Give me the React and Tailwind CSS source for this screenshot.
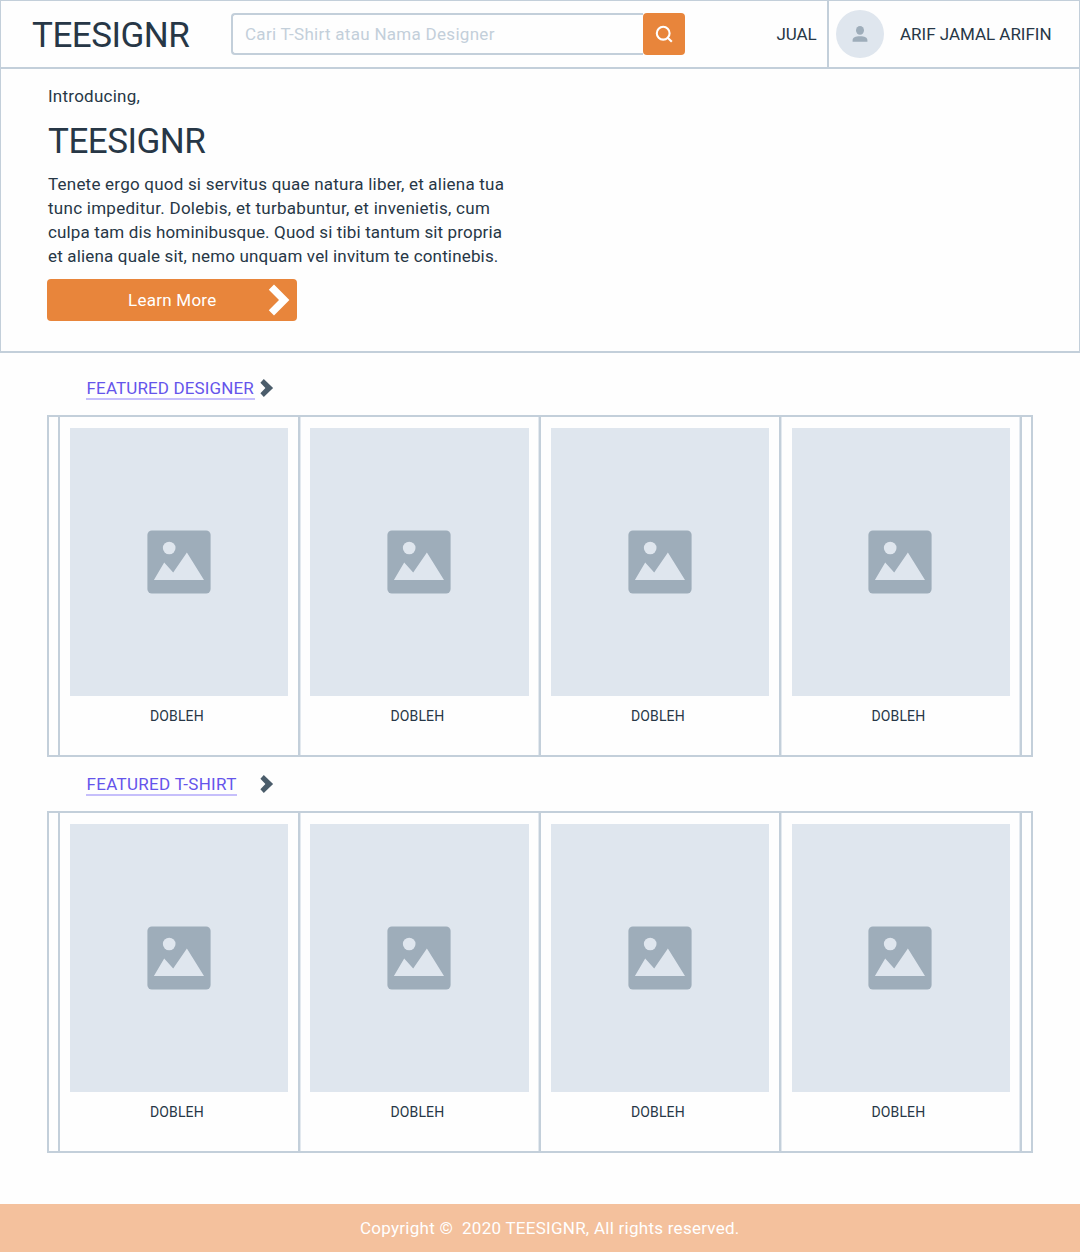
const intro = [
  { text: "Tenete ergo quod si servitus quae natura liber, et aliena tua", spacing: "tracking-[0.22px]" },
  { text: "tunc impeditur. Dolebis, et turbabuntur, et invenietis, cum", spacing: "tracking-[0.27px]" },
  { text: "culpa tam dis hominibusque. Quod si tibi tantum sit propria", spacing: "tracking-[0.14px]" },
  { text: "et aliena quale sit, nemo unquam vel invitum te continebis.", spacing: "tracking-[0.17px]" },
];

const cards = [
  { name: "DOBLEH", divider: "", cell: "w-[238px] pl-[10px]", image: "w-[218px]", icon: "ml-[77px]", label: "pl-[80px]" },
  { name: "DOBLEH", divider: "shadow-[1px_0_0_#e3e9ef]", cell: "w-[239px] pl-[10px]", image: "w-[219px]", icon: "ml-[77px]", label: "pl-[80.5px]" },
  { name: "DOBLEH", divider: "shadow-[-1px_0_0_#e3e9ef]", cell: "w-[238px] pl-[10px]", image: "w-[218px]", icon: "ml-[77px]", label: "pl-[80px]" },
  { name: "DOBLEH", divider: "shadow-[1px_0_0_#e3e9ef]", cell: "w-[239px] pl-[11px]", image: "w-[218px]", icon: "ml-[76px]", label: "pl-[79.5px]" },
];

function ImageIcon() {
  return (
    <svg className="size-[64px]" viewBox="0 0 64 64">
      <rect x="0.4" y="0.4" width="63.2" height="63.2" rx="4.5" fill="#9eadba" />
      <circle cx="22.2" cy="18" r="6.3" fill="#dfe6ee" />
      <path d="M6.9 50 17.2 32.6 26.2 42.4 39.9 22.6 57 50Z" fill="#dfe6ee" />
    </svg>
  );
}

function Card({ card }) {
  return (
    <div className={`pt-[11px] ${card.cell}`}>
      <div className={`flex h-[268px] items-start bg-[#dfe6ee] pt-[102px] ${card.image}`}>
        <div className={card.icon}>
          <ImageIcon />
        </div>
      </div>
      <div className={`h-10 text-[14px] leading-10 tracking-[0.12px] text-[#273746] ${card.label}`}>{card.name}</div>
    </div>
  );
}

function Section({ title, spacing, width }) {
  return (
    <section className="px-[47px]">
      <div className="flex h-[62px]">
        <div className="w-[213px] pl-[39px] pt-[23px]">
          <div className={`h-6 whitespace-nowrap border-b-2 border-[#c6bffb] text-[17px] leading-6 text-[#6554eb] ${spacing} ${width}`}>
            {title}
          </div>
        </div>
        <svg className="mt-[25px] h-5 w-[14px]" viewBox="0 0 14 20">
          <path d="M0.4 4.7 3.8 1 13.1 10 3.8 19 0.4 15.3 5.4 10Z" fill="#4b5d6b" />
        </svg>
      </div>
      <div className="flex h-[342px] border-2 border-[#c3cfda] pl-[9px]">
        {cards.map((card, i) => (
          <div key={i} className="flex">
            <div className={`w-[2px] bg-[#c3cfda] ${card.divider}`} />
            <Card card={card} />
          </div>
        ))}
        <div className="w-[2px] bg-[#c3cfda] shadow-[-1px_0_0_#e3e9ef]" />
      </div>
    </section>
  );
}

export default function App() {
  return (
    <div className="flex h-[1252px] w-[1080px] flex-col bg-[#fefefe] font-[Roboto,sans-serif] text-[17px] leading-6 text-[#273746]">
      <header className="flex h-[69px] border border-b-2 border-[#c3cfda]">
        <div className="w-[230px] pl-[31px] text-[35px] leading-[69px] tracking-[-0.5px]">TEESIGNR</div>
        <div className="mt-3 flex h-[42px] w-[454px]">
          <div className="w-[412px] rounded-l-[4px] border-2 border-r-0 border-[#c3cfda] pl-3 leading-[39px] tracking-[0.29px] text-[#c3cfda]">
            Cari T-Shirt atau Nama Designer
          </div>
          <button className="flex size-[42px] items-center justify-center rounded-[4px] bg-[#e8853b]">
            <svg className="size-5" viewBox="0 0 20 20" fill="none" stroke="#fff" strokeWidth="2.1">
              <circle cx="9.2" cy="9.2" r="6.4" />
              <path d="M13.7 13.7 17.8 17.8" />
            </svg>
          </button>
        </div>
        <div className="ml-[91.5px] w-[50.5px] leading-[66px] tracking-[-0.1px]">JUAL</div>
        <div className="flex border-l-2 border-[#c3cfda] pl-[7px]">
          <div className="mt-[9px] flex size-12 items-center justify-center rounded-full bg-[#dfe6ee]">
            <svg className="size-5" viewBox="0 0 20 20" fill="#9eadba">
              <ellipse cx="10" cy="6.3" rx="4" ry="4.4" />
              <path d="M2.6 17.8V16c0-2.5 2.7-3.8 7.4-3.8s7.4 1.3 7.4 3.8v1.8Z" />
            </svg>
          </div>
          <div className="pl-4 leading-[66px] tracking-[-0.02px]">ARIF JAMAL ARIFIN</div>
        </div>
      </header>

      <section className="h-[284px] border-x border-b-2 border-[#c3cfda] pl-[46px] pt-[15px]">
        <div className="pl-px tracking-[0.25px]">Introducing,</div>
        <h1 className="mb-[10px] mt-[13px] pl-px text-[35px] leading-[41px] tracking-[-0.5px]">TEESIGNR</h1>
        <div className="pl-px">
          {intro.map((line) => (
            <div key={line.text} className={`whitespace-nowrap ${line.spacing}`}>
              {line.text}
            </div>
          ))}
        </div>
        <button className="mt-[11px] flex h-[42px] w-[250px] items-center rounded-[4px] bg-[#e8853b] pl-[81px] text-white">
          <span className="w-[140px] text-left tracking-[0.25px]">Learn More</span>
          <svg className="h-8 w-[22px]" viewBox="0 0 22 32">
            <path d="M0.8 5.8 6 0.6 21.4 16 6 31.4 0.8 26.2 11 16Z" fill="#fff" />
          </svg>
        </button>
      </section>

      <Section title="FEATURED DESIGNER" spacing="tracking-[0.12px] indent-[0.6px]" width="w-[169px]" />
      <div className="-mt-2 pt-[0px]">
        <Section title="FEATURED T-SHIRT" spacing="tracking-[0.31px] indent-[0.5px]" width="w-[151px]" />
      </div>

      <footer className="mt-auto h-12 bg-[#f4c19d] pl-[360px] leading-[48px] tracking-[0.26px] text-white">
        Copyright ©{"\u00a0"} 2020 TEESIGNR, All rights reserved.
      </footer>
    </div>
  );
}
